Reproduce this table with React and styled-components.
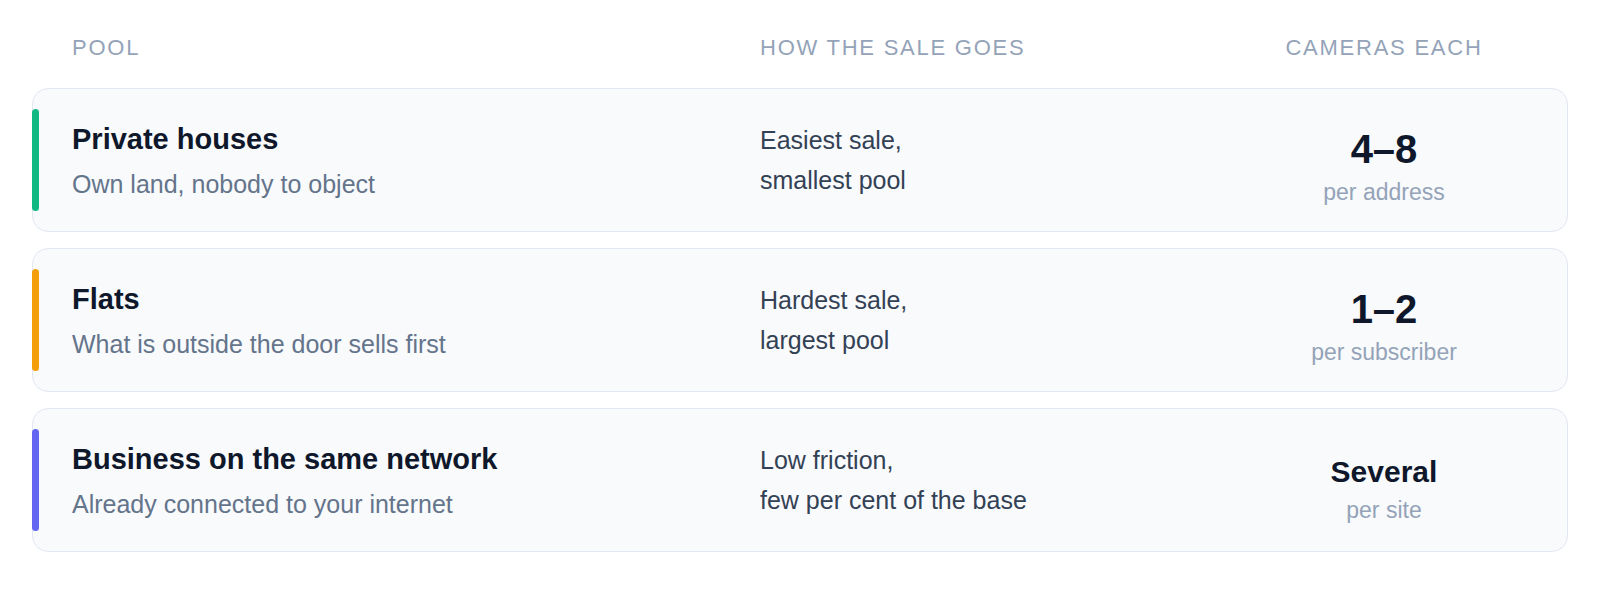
import React from "react";
import styled, { createGlobalStyle } from "styled-components";

const GlobalStyle = createGlobalStyle`
  body {
    margin: 0;
    background: #ffffff;
    font-family: "Liberation Sans", Arial, Helvetica, sans-serif;
  }
`;

const Page = styled.div`
  padding: 34px 32px 0;
`;

const HeaderRow = styled.div`
  display: grid;
  grid-template-columns: 688px 480px 288px;
  padding: 0 40px;
  margin-bottom: 26px;
`;

const HeaderCell = styled.div`
  font-size: 22px;
  line-height: 28px;
  letter-spacing: 0.08em;
  text-transform: uppercase;
  color: #94a3b8;
  text-align: ${(props) => (props.$center ? "center" : "left")};
`;

const List = styled.div`
  display: flex;
  flex-direction: column;
  gap: 16px;
`;

const Card = styled.div`
  display: flex;
  align-items: stretch;
  padding: 20px 39px 20px 0;
  background-color: #f8fafc;
  border: 1px solid #e2e8f0;
  border-radius: 16px;
`;

const Accent = styled.div`
  flex-shrink: 0;
  width: 7px;
  margin-left: -1px;
  border-radius: 4px;
  background-color: ${(props) => props.$color};
`;

const Row = styled.div`
  flex: 1;
  margin-left: 33px;
  min-height: 102px;
  display: grid;
  grid-template-columns: 688px 480px 288px;
  align-items: center;
`;

const Pool = styled.div`
  display: flex;
  flex-direction: column;
`;

const Title = styled.div`
  font-size: 29px;
  line-height: 36px;
  font-weight: 700;
  color: #0f172a;
`;

const Subtitle = styled.div`
  margin-top: 11px;
  font-size: 25px;
  line-height: 32px;
  color: #64748b;
`;

const Sale = styled.div`
  font-size: 25px;
  line-height: 40px;
  color: #334155;
`;

const Stat = styled.div`
  display: flex;
  flex-direction: column;
  align-items: center;
  padding-top: 13px;
`;

const Value = styled.div`
  font-size: ${(props) => (props.$word ? "30px" : "40px")};
  line-height: 44px;
  font-weight: 700;
  color: #0f172a;
`;

const Unit = styled.div`
  margin-top: ${(props) => (props.$word ? "2px" : "7px")};
  font-size: 23px;
  line-height: 28px;
  color: #94a3b8;
`;

const pools = [
  {
    color: "#10b981",
    title: "Private houses",
    sub: "Own land, nobody to object",
    sale: ["Easiest sale,", "smallest pool"],
    value: "4–8",
    unit: "per address",
  },
  {
    color: "#f59e0b",
    title: "Flats",
    sub: "What is outside the door sells first",
    sale: ["Hardest sale,", "largest pool"],
    value: "1–2",
    unit: "per subscriber",
  },
  {
    color: "#6366f1",
    title: "Business on the same network",
    sub: "Already connected to your internet",
    sale: ["Low friction,", "few per cent of the base"],
    value: "Several",
    unit: "per site",
    word: true,
  },
];

function App() {
  return (
    <Page>
      <GlobalStyle />
      <HeaderRow>
        <HeaderCell>Pool</HeaderCell>
        <HeaderCell>How the sale goes</HeaderCell>
        <HeaderCell $center>Cameras each</HeaderCell>
      </HeaderRow>
      <List>
        {pools.map((p) => (
          <Card key={p.title}>
            <Accent $color={p.color} />
            <Row>
              <Pool>
                <Title>{p.title}</Title>
                <Subtitle>{p.sub}</Subtitle>
              </Pool>
              <Sale>
                {p.sale[0]}
                <br />
                {p.sale[1]}
              </Sale>
              <Stat>
                <Value $word={p.word}>{p.value}</Value>
                <Unit $word={p.word}>{p.unit}</Unit>
              </Stat>
            </Row>
          </Card>
        ))}
      </List>
    </Page>
  );
}

export default App;
